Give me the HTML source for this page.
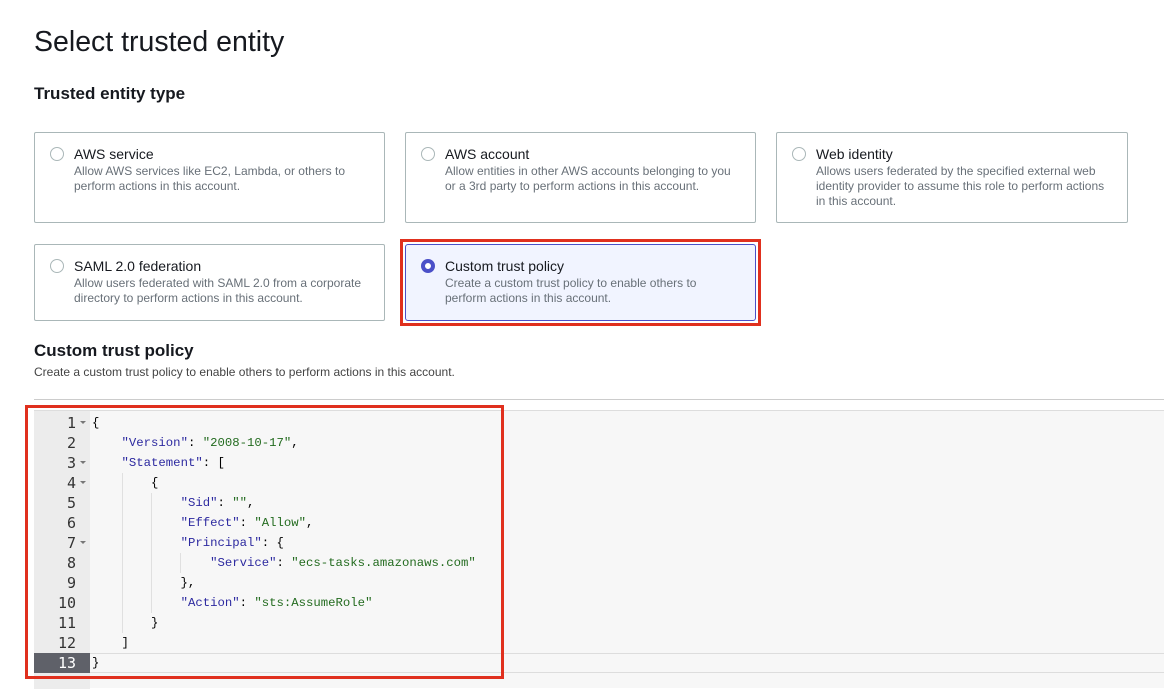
<!DOCTYPE html>
<html><head><style>
*{margin:0;padding:0;box-sizing:border-box}
body{width:1164px;height:688px;background:#fff;font-family:"Liberation Sans",Arial,sans-serif;color:#16191f;position:relative;overflow:hidden}
.a{position:absolute}
h1{position:absolute;left:34px;top:26px;font-size:28.5px;font-weight:400;color:#16191f}
h2{position:absolute;left:34px;top:84px;font-size:17px;font-weight:700}
.card{position:absolute;border:1px solid #aab7b8;border-radius:2px;background:#fff}
.card .r{position:absolute;left:15px;top:14px;width:14px;height:14px;border:1px solid #aab7b8;border-radius:50%}
.card .t{position:absolute;left:39px;top:13px;font-size:14px;color:#16191f}
.card .d{position:absolute;left:39px;top:31px;font-size:12px;line-height:15px;color:#687078;width:290px}
.sel{background:#f1f4ff;border-color:#4b50c8;border-radius:3px}
.sel .r{border:4px solid #4b50c8;background:#fff}
.code{position:absolute;left:34px;top:410px;width:1130px;height:278px;background:#f7f7f7;border-top:1px solid #ddd}
.gut{position:absolute;left:0;top:0;width:56px;height:278px;background:#ececec}
.ln{position:absolute;left:0;width:56px;height:20px;font:15px/20px "DejaVu Sans Mono","Liberation Mono",monospace;color:#333}
.ln span{position:absolute;right:14px}
.ln i{position:absolute;right:4px;top:8px;border-left:3px solid transparent;border-right:3px solid transparent;border-top:3px solid #777}
.cl{position:absolute;left:58px;height:20px;font:12.3px/20px "Liberation Mono",monospace;white-space:pre;color:#000}
.k{color:#2d2aa0}.s{color:#236b1f}
.g{position:absolute;width:1px;height:20px;background:#e0e0e0}
</style></head><body>
<h1>Select trusted entity</h1>
<h2>Trusted entity type</h2>

<div class="card" style="left:34px;top:132px;width:351px;height:91px"><div class="r"></div><div class="t">AWS service</div><div class="d">Allow AWS services like EC2, Lambda, or others to perform actions in this account.</div></div>
<div class="card" style="left:405px;top:132px;width:351px;height:91px"><div class="r"></div><div class="t">AWS account</div><div class="d">Allow entities in other AWS accounts belonging to you or a 3rd party to perform actions in this account.</div></div>
<div class="card" style="left:776px;top:132px;width:352px;height:91px"><div class="r"></div><div class="t">Web identity</div><div class="d">Allows users federated by the specified external web identity provider to assume this role to perform actions in this account.</div></div>
<div class="card" style="left:34px;top:244px;width:351px;height:77px"><div class="r"></div><div class="t">SAML 2.0 federation</div><div class="d">Allow users federated with SAML 2.0 from a corporate directory to perform actions in this account.</div></div>
<div class="card sel" style="left:405px;top:244px;width:351px;height:77px"><div class="r"></div><div class="t">Custom trust policy</div><div class="d" style="width:270px">Create a custom trust policy to enable others to perform actions in this account.</div></div>
<div class="a" style="left:400px;top:239px;width:361px;height:87px;border:3px solid #e0301e"></div>

<div class="a" style="left:34px;top:341px;font-size:17px;font-weight:700">Custom trust policy</div>
<div class="a" style="left:34px;top:365px;font-size:12px;color:#444">Create a custom trust policy to enable others to perform actions in this account.</div>
<div class="a" style="left:34px;top:399px;width:1130px;height:1px;background:#ccc"></div>

<div class="code">
<div class="gut"></div>
<div class="a" style="left:0;top:242px;width:56px;height:20px;background:#5f6169"></div>
<div class="a" style="left:56px;top:242px;width:1074px;height:20px;border-top:1px solid #ddd;border-bottom:1px solid #ddd"></div>
<div class="ln" style="top:2px"><span>1</span><i></i></div>
<div class="ln" style="top:22px"><span>2</span></div>
<div class="ln" style="top:42px"><span>3</span><i></i></div>
<div class="ln" style="top:62px"><span>4</span><i></i></div>
<div class="ln" style="top:82px"><span>5</span></div>
<div class="ln" style="top:102px"><span>6</span></div>
<div class="ln" style="top:122px"><span>7</span><i></i></div>
<div class="ln" style="top:142px"><span>8</span></div>
<div class="ln" style="top:162px"><span>9</span></div>
<div class="ln" style="top:182px"><span>10</span></div>
<div class="ln" style="top:202px"><span>11</span></div>
<div class="ln" style="top:222px"><span>12</span></div>
<div class="ln" style="top:242px;color:#fff"><span>13</span></div>
<div class="g" style="left:88px;top:62px;height:160px"></div>
<div class="g" style="left:117px;top:82px;height:120px"></div>
<div class="g" style="left:146px;top:142px"></div>
<div class="cl" style="top:2px">{</div>
<div class="cl" style="top:22px">    <span class="k">"Version"</span>: <span class="s">"2008-10-17"</span>,</div>
<div class="cl" style="top:42px">    <span class="k">"Statement"</span>: [</div>
<div class="cl" style="top:62px">        {</div>
<div class="cl" style="top:82px">            <span class="k">"Sid"</span>: <span class="s">""</span>,</div>
<div class="cl" style="top:102px">            <span class="k">"Effect"</span>: <span class="s">"Allow"</span>,</div>
<div class="cl" style="top:122px">            <span class="k">"Principal"</span>: {</div>
<div class="cl" style="top:142px">                <span class="k">"Service"</span>: <span class="s">"ecs-tasks.amazonaws.com"</span></div>
<div class="cl" style="top:162px">            },</div>
<div class="cl" style="top:182px">            <span class="k">"Action"</span>: <span class="s">"sts:AssumeRole"</span></div>
<div class="cl" style="top:202px">        }</div>
<div class="cl" style="top:222px">    ]</div>
<div class="cl" style="top:242px">}</div>
</div>
<div class="a" style="left:25px;top:405px;width:479px;height:274px;border:3px solid #e0301e"></div>
</body></html>
